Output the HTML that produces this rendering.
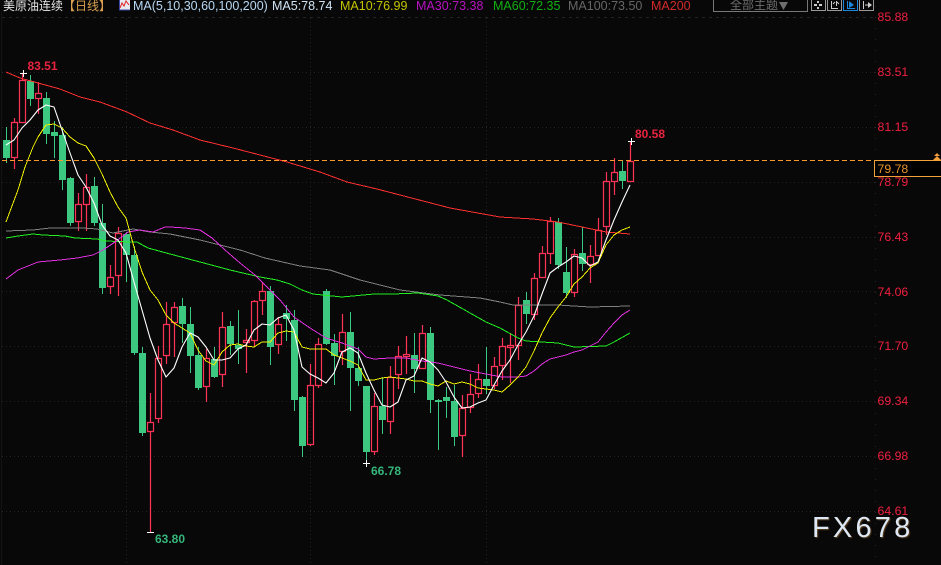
<!DOCTYPE html>
<html><head><meta charset="utf-8"><style>
html,body{margin:0;padding:0;background:#080808;width:941px;height:565px;overflow:hidden}
svg{position:absolute;left:0;top:0}
text{font-family:"Liberation Sans","Noto Sans CJK SC",sans-serif}
.ax text{font-size:12.3px;fill:#f02040}
.hd text{font-size:12.5px}
.ma{fill:none;stroke-width:1;stroke-linejoin:round;shape-rendering:crispEdges}
.sm{fill:none;stroke-width:1.1;stroke-linejoin:round}
#wm{position:absolute;left:812px;top:511px;font:29px/34px "Liberation Sans",sans-serif;letter-spacing:3.2px;color:#dde8f4;text-shadow:1px 1px 1px #5a4020;white-space:nowrap}
</style></head><body>
<svg width="941" height="565" viewBox="0 0 941 565">
<g fill="none" stroke="#242424" stroke-width="1" shape-rendering="crispEdges">
<path d="M2 17.5H875" stroke-dasharray="3 4"/>
<path d="M2 72.5H875M2 127.5H875M2 182.5H875M2 237.5H875M2 291.5H875M2 346.5H875M2 401.5H875M2 456.5H875M2 511.5H875" stroke-dasharray="1 3"/>
<path d="M126.5 18V565M310.5 18V565M486.5 18V565" stroke-dasharray="1 3"/>
<path d="M875.5 6V565" stroke-dasharray="1 10"/>
<path d="M1.5 12V565" stroke="#141414"/>
</g>
<!-- green candles -->
<g fill="#3cc880" shape-rendering="crispEdges">
<path d="M6 127h1v13h3v18h-3v5h-1v-5h-3v-18h3z"/>
<path d="M30 75h1v6h3v18h-3v7h-1v-7h-3v-18h3z"/>
<path d="M46 92h1v6h3v36h-3v10h-1v-10h-3v-36h3z"/>
<path d="M54 121h1v11h3v4h-3v22h-1v-22h-3v-4h3z"/>
<path d="M62 127h1v8h3v45h-3v10h-1v-10h-3v-45h3z"/>
<path d="M70 177h1v1h3v45h-3v3h-1v-3h-3v-45h3z"/>
<path d="M94 177h1v9h3v37h-3v3h-1v-3h-3v-37h3z"/>
<path d="M102 204h1v19h3v65h-3v6h-1v-6h-3v-65h3z"/>
<path d="M126 232h1v2h3v21h-3v27h-1v-27h-3v-21h3z"/>
<path d="M134 246h1v9h3v98h-3v2h-1v-2h-3v-98h3z"/>
<path d="M142 347h1v6h3v80h-3v3h-1v-3h-3v-80h3z"/>
<path d="M182 298h1v8h3v18h-3v19h-1v-19h-3v-18h3z"/>
<path d="M190 307h1v17h3v32h-3v17h-1v-17h-3v-32h3z"/>
<path d="M198 347h1v8h3v33h-3v2h-1v-2h-3v-33h3z"/>
<path d="M214 347h1v12h3v18h-3v1h-1v-1h-3v-18h3z"/>
<path d="M230 321h1v5h3v18h-3v11h-1v-11h-3v-18h3z"/>
<path d="M238 310h1v35h3v4h-3v15h-1v-15h-3v-4h3z"/>
<path d="M270 286h1v5h3v56h-3v18h-1v-18h-3v-56h3z"/>
<path d="M286 305h1v8h3v6h-3v22h-1v-22h-3v-6h3z"/>
<path d="M294 310h1v10h3v80h-3v11h-1v-11h-3v-80h3z"/>
<path d="M302 396h1v1h3v49h-3v11h-1v-11h-3v-49h3z"/>
<path d="M326 289h1v2h3v53h-3v1h-1v-1h-3v-53h3z"/>
<path d="M334 334h1v9h3v13h-3v29h-1v-29h-3v-13h3z"/>
<path d="M350 312h1v20h3v36h-3v43h-1v-43h-3v-36h3z"/>
<path d="M358 347h1v21h3v13h-3v5h-1v-5h-3v-13h3z"/>
<path d="M366 386h1v0h3v66h-3v11h-1v-11h-3v-66h3z"/>
<path d="M382 377h1v29h3v14h-3v14h-1v-14h-3v-14h3z"/>
<path d="M414 333h1v22h3v14h-3v24h-1v-24h-3v-14h3z"/>
<path d="M430 327h1v6h3v67h-3v13h-1v-13h-3v-67h3z"/>
<path d="M438 399h1v1h3v2h-3v48h-1v-48h-3v-2h3z"/>
<path d="M446 387h1v10h3v4h-3v17h-1v-17h-3v-4h3z"/>
<path d="M454 385h1v16h3v36h-3v9h-1v-9h-3v-36h3z"/>
<path d="M486 347h1v32h3v7h-3v8h-1v-8h-3v-7h3z"/>
<path d="M526 292h1v8h3v14h-3v10h-1v-10h-3v-14h3z"/>
<path d="M558 218h1v4h3v43h-3v4h-1v-4h-3v-43h3z"/>
<path d="M566 247h1v25h3v21h-3v5h-1v-5h-3v-21h3z"/>
<path d="M582 227h1v26h3v11h-3v7h-1v-7h-3v-11h3z"/>
<path d="M622 161h1v10h3v10h-3v8h-1v-8h-3v-10h3z"/>
</g>
<!-- red candles -->
<g fill="none" stroke="#ff3355" stroke-width="1.2">
<path d="M14.5 118V122M14.5 158V169M11.5 122.5H17.5V157.5H11.5Z"/>
<path d="M22.5 73V80M19.5 80.5H25.5V122.5H19.5Z"/>
<path d="M38.5 82V93M38.5 99V114M35.5 93.5H41.5V98.5H35.5Z"/>
<path d="M78.5 193V204M78.5 222V231M75.5 204.5H81.5V221.5H75.5Z"/>
<path d="M86.5 174V187M86.5 205V231M83.5 187.5H89.5V204.5H83.5Z"/>
<path d="M110.5 265V277M110.5 287V294M107.5 277.5H113.5V286.5H107.5Z"/>
<path d="M118.5 227V233M118.5 276V296M115.5 233.5H121.5V275.5H115.5Z"/>
<path d="M150.5 393V422M150.5 432V532M147.5 422.5H153.5V431.5H147.5Z"/>
<path d="M158.5 346V358M158.5 419V423M155.5 358.5H161.5V418.5H155.5Z"/>
<path d="M166.5 302V324M166.5 356V364M163.5 324.5H169.5V355.5H163.5Z"/>
<path d="M174.5 302V307M174.5 323V357M171.5 307.5H177.5V322.5H171.5Z"/>
<path d="M206.5 349V358M206.5 387V402M203.5 358.5H209.5V386.5H203.5Z"/>
<path d="M222.5 312V327M222.5 375V387M219.5 327.5H225.5V374.5H219.5Z"/>
<path d="M246.5 329V340M246.5 343V373M243.5 340.5H249.5V342.5H243.5Z"/>
<path d="M254.5 300V301M254.5 341V347M251.5 301.5H257.5V340.5H251.5Z"/>
<path d="M262.5 282V291M262.5 301V315M259.5 291.5H265.5V300.5H259.5Z"/>
<path d="M278.5 317V324M278.5 345V354M275.5 324.5H281.5V344.5H275.5Z"/>
<path d="M310.5 364V385M310.5 445V446M307.5 385.5H313.5V444.5H307.5Z"/>
<path d="M318.5 338V344M318.5 386V388M315.5 344.5H321.5V385.5H315.5Z"/>
<path d="M342.5 314V332M342.5 352V365M339.5 332.5H345.5V351.5H339.5Z"/>
<path d="M374.5 393V406M374.5 452V455M371.5 406.5H377.5V451.5H371.5Z"/>
<path d="M390.5 366V377M390.5 422V434M387.5 377.5H393.5V421.5H387.5Z"/>
<path d="M398.5 346V356M398.5 375V389M395.5 356.5H401.5V374.5H395.5Z"/>
<path d="M406.5 336V354M406.5 357V374M403.5 354.5H409.5V356.5H403.5Z"/>
<path d="M422.5 325V333M419.5 333.5H425.5V368.5H419.5Z"/>
<path d="M462.5 395V408M462.5 436V457M459.5 408.5H465.5V435.5H459.5Z"/>
<path d="M470.5 374V394M470.5 408V413M467.5 394.5H473.5V407.5H467.5Z"/>
<path d="M478.5 364V379M478.5 394V398M475.5 379.5H481.5V393.5H475.5Z"/>
<path d="M494.5 357V366M494.5 386V389M491.5 366.5H497.5V385.5H491.5Z"/>
<path d="M502.5 338V346M502.5 366V380M499.5 346.5H505.5V365.5H499.5Z"/>
<path d="M510.5 333V345M510.5 348V383M507.5 345.5H513.5V347.5H507.5Z"/>
<path d="M518.5 297V305M518.5 346V360M515.5 305.5H521.5V345.5H515.5Z"/>
<path d="M534.5 273V278M534.5 315V320M531.5 278.5H537.5V314.5H531.5Z"/>
<path d="M542.5 246V253M539.5 253.5H545.5V277.5H539.5Z"/>
<path d="M550.5 217V221M550.5 254V264M547.5 221.5H553.5V253.5H547.5Z"/>
<path d="M574.5 249V254M574.5 293V297M571.5 254.5H577.5V292.5H571.5Z"/>
<path d="M590.5 245V256M590.5 265V283M587.5 256.5H593.5V264.5H587.5Z"/>
<path d="M598.5 218V230M595.5 230.5H601.5V255.5H595.5Z"/>
<path d="M606.5 172V181M606.5 227V235M603.5 181.5H609.5V226.5H603.5Z"/>
<path d="M614.5 158V172M614.5 182V195M611.5 172.5H617.5V181.5H611.5Z"/>
<path d="M630.5 141V161M627.5 161.5H633.5V181.5H627.5Z"/>
</g>
<!-- extreme marks -->
<g stroke="#fff" stroke-width="1" shape-rendering="crispEdges" fill="none">
<path d="M20 73.5H27M23.5 70V77"/>
<path d="M628 141.5H635M631.5 138V145"/>
<path d="M363 463.5H370M366.5 460V467"/>
<path d="M147 532.5H154"/>
</g>
<!-- MA lines -->
<polyline class="ma" stroke="#808080" points="6,231 33,230 50,228 83,228 97,229 113,233 133,229 150,232 170,234 200,240 240,250 265,258 300,266 330,270 360,280 400,290 440,295 480,298 500,302 513,305 558,305 590,307 630,306"/>
<polyline class="ma" stroke="#22ee22" points="6,238 18,236 33,234 43,235 65,236 75,238 97,239 107,241 128,242 137,242 148,248 170,254 200,262 230,270 260,277 277,280 290,284 302,290 313,294 342,297 374,294 393,294 418,293 438,296 447,300 486,322 500,328 518,338 526,341 558,343 574,347 606,346 614,342 630,333"/>
<polyline class="ma" stroke="#e030e0" points="6,279 18,270 38,262 60,260 77,258 93,255 103,250 115,242 128,232 140,230 153,232 165,227 170,227 185,228 200,230 212,238 225,250 240,263 255,275 260,280 280,300 294,317 310,328 326,338 342,343 358,349 366,357 374,359 390,358 406,358 422,361 438,363 454,367 470,371 486,374 502,377 518,377 526,376 534,371 542,364 550,359 558,357 566,355 574,352 582,350 590,346 598,342 606,332 614,323 622,315 630,310"/>
<polyline class="ma" stroke="#ff3030" points="6,72 20,78 38,83 60,89 80,97 100,102 127,112 150,123 173,130 200,140 233,148 260,155 287,162 320,172 347,182 377,189 400,195 450,208 500,217 533,219 558,222 582,227 606,232 630,234"/>
<polyline class="ma" stroke="#f0f000" points="6,222 18,190 25,167 33,147 38,137 46,125 54,124 62,128 70,137 78,143 86,146 94,158 102,174 110,192 118,207 126,218 134,247 142,272 150,290 158,300 166,315 174,323 182,328 190,333 198,350 206,361 214,365 222,352 230,345 238,344 246,346 254,347 262,342 270,342 278,333 286,331 294,332 302,347 310,349 318,349 326,349 334,355 342,358 350,361 358,365 366,380 374,380 382,378 390,377 398,378 406,379 414,381 422,381 430,384 438,386 446,381 454,384 462,382 470,384 478,388 486,389 494,390 502,392 510,385 518,377 526,367 534,351 542,333 550,318 558,307 566,297 574,284 582,277 590,268 598,263 606,245 614,235 622,230 630,227"/>
<polyline class="sm" stroke="#ffffff" points="6,145 14,140 22,128 30,120 38,110 46,105 54,107 62,130 70,153 78,175 86,187 94,203 102,225 110,236 118,240 126,253 134,282 142,310 150,338 158,360 166,377 174,368 182,347 190,333 198,337 206,347 214,360 222,360 230,358 238,349 246,345 254,330 262,324 270,325 278,318 286,315 294,330 302,367 310,374 318,378 326,383 334,373 342,352 350,348 358,353 366,373 374,390 382,405 390,407 398,402 406,380 414,376 422,358 430,362 438,370 446,382 454,397 462,408 470,407 478,403 486,400 494,385 502,371 510,360 518,345 526,332 534,316 542,294 550,273 558,267 566,262 574,256 582,258 590,266 598,262 606,240 614,220 622,202 630,185"/>
<!-- current price -->
<path d="M2 160.5H874" stroke="#ff9a2a" stroke-width="1" stroke-dasharray="5 3" shape-rendering="crispEdges"/>
<!-- right axis -->
<g class="ax">
<text x="877.5" y="21">85.88</text>
<text x="877.5" y="76">83.51</text>
<text x="877.5" y="131">81.15</text>
<text x="877.5" y="186">78.79</text>
<text x="877.5" y="241">76.43</text>
<text x="877.5" y="296">74.06</text>
<text x="877.5" y="350">71.70</text>
<text x="877.5" y="405">69.34</text>
<text x="877.5" y="460">66.98</text>
<text x="877.5" y="515">64.61</text>
</g>
<rect x="874.5" y="160.5" width="70" height="16" fill="#000" stroke="#f2a03a" shape-rendering="crispEdges"/>
<text x="877.5" y="173" font-size="12.3" fill="#e8952e">79.78</text>
<path d="M937 153l3 3h-6zM937 156l4 4h-8z" fill="#f2a03a"/>
<!-- labels -->
<g font-size="12" font-weight="bold">
<text x="27.5" y="70" fill="#e8233f">83.51</text>
<text x="635" y="138" fill="#e8233f">80.58</text>
<text x="155" y="543" fill="#35b57a">63.80</text>
<text x="371" y="475" fill="#35b57a">66.78</text>
</g>
<!-- header -->
<g class="hd">
<text x="3" y="10" style="font-size:12px" fill="#e4e4e4">美原油连续</text>
<text x="63" y="10" style="font-size:12px" fill="#d8a050">【日线】</text>
<text x="133" y="10" fill="#b8d8f4">MA(5,10,30,60,100,200)</text>
<text x="272" y="10" fill="#cfe3f4">MA5:78.74</text>
<text x="340" y="10" fill="#c4c400">MA10:76.99</text>
<text x="416" y="10" fill="#b812c0">MA30:73.38</text>
<text x="493" y="10" fill="#12b012">MA60:72.35</text>
<text x="568" y="10" fill="#666">MA100:73.50</text>
<text x="651" y="10" fill="#d22a2a">MA200</text>
</g>
<rect x="119" y="0" width="11" height="10" fill="#e8e8f0"/>
<path d="M119.5 0V10H130" fill="none" stroke="#3848a8"/>
<path d="M120 8l2-5 2 3 2-5 3 4" fill="none" stroke="#e02020"/>
<path d="M713.5 0V11.5H807.5V0" fill="none" stroke="#777" shape-rendering="crispEdges"/>
<text x="730" y="9" font-size="12" fill="#6e6e6e">全部主题</text>
<path d="M779 2h9l-4.500 8z" fill="#6e6e6e"/>
<g fill="none" stroke="#999" shape-rendering="crispEdges">
<path d="M811.500 0V10.500H825.500V0"/>
<path d="M827.500 0V10.500H841.500V0"/>
<path d="M859.500 0V10.500H873.500V0"/>
<path d="M843.500 0V10.500H857.500V0" stroke="#1a88dc"/>
</g>
<path d="M817 1h2v2h-2zM817 7h2v2h-2zM814 4h3v2h-3zM819 4h3v2h-3z" fill="#ccc"/>
<path d="M831.500 1V8.500H838M836.500 1V6M833 4l2-2M839 4l-2-2" fill="none" stroke="#ccc"/>
<path d="M847.500 1V8.500H855" fill="none" stroke="#1a88dc"/>
<path d="M849 1l5 4-5 3z" fill="#1a88dc"/>
<path d="M863.500 1V9M865 5H870" stroke="#ccc" fill="none"/>
<path d="M868 2l4 3-4 3z" fill="#ccc"/>
</svg>
<div id="wm">FX678</div>
</body></html>
